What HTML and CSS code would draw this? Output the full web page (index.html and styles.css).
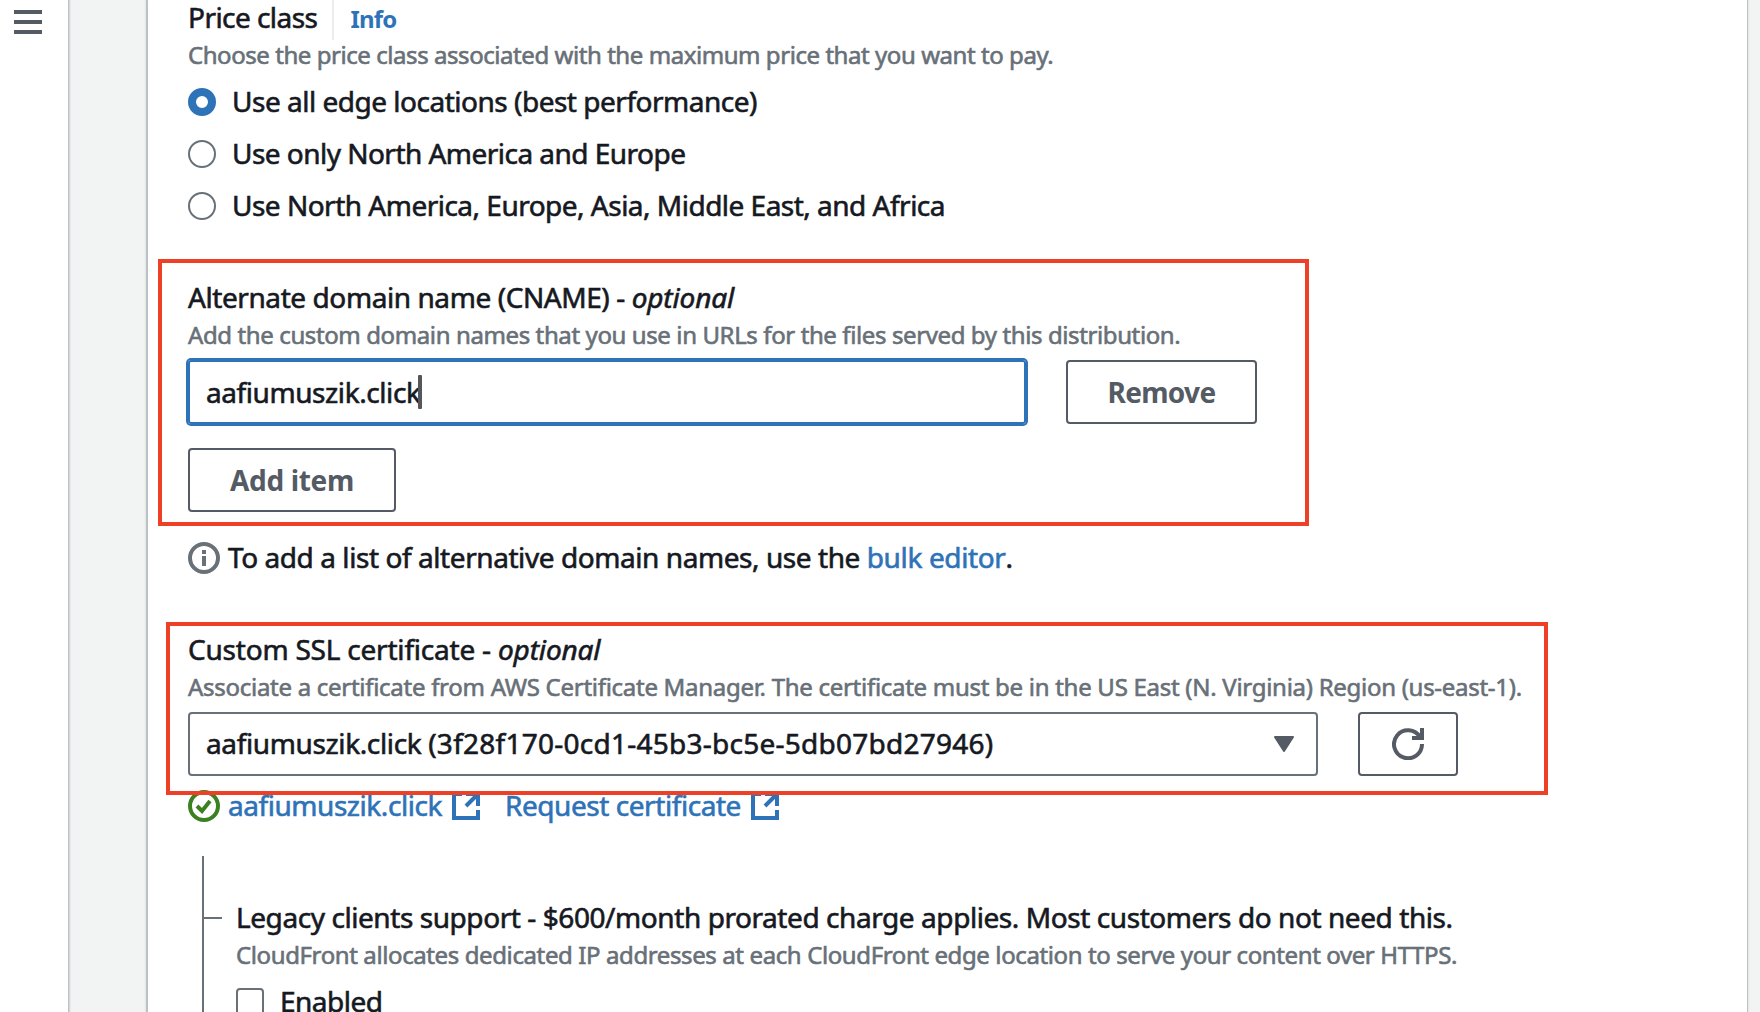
FILE: index.html
```html
<!DOCTYPE html>
<html lang="en">
<head>
<meta charset="utf-8">
<title>Create distribution</title>
<link rel="stylesheet" href="styles.css">
</head>
<body>
<div class="app">
  <nav class="rail" aria-label="Navigation">
    <svg class="menu" width="28" height="24" viewBox="0 0 28 24"><path d="M0 2h28M0 12h28M0 22h28" stroke="#545b64" stroke-width="4"/></svg>
  </nav>
  <main class="card">
    <section class="price">
      <div class="price-head"><h2 class="label ls-price">Price class</h2><a class="info">Info</a></div>
      <p class="hint hint-price">Choose the price class associated with the maximum price that you want to pay.</p>
      <div class="radios">
        <label class="radio"><span class="dot checked"></span><span class="radio-text ls-all">Use all edge locations (best performance)</span></label>
        <label class="radio"><span class="dot"></span><span class="radio-text ls-two">Use only North America and Europe</span></label>
        <label class="radio"><span class="dot"></span><span class="radio-text ls-three">Use North America, Europe, Asia, Middle East, and Africa</span></label>
      </div>
    </section>

    <section class="cname">
      <h2 class="label ls-cname-label">Alternate domain name (CNAME) - <i>optional</i></h2>
      <p class="hint ls-cname">Add the custom domain names that you use in URLs for the files served by this distribution.</p>
      <div class="row">
        <div class="input"><span class="ls-input">aafiumuszik.click</span><span class="caret"></span></div>
        <button class="btn remove">Remove</button>
      </div>
      <button class="btn add">Add item</button>
      <div class="mark mark-cname"></div>
    </section>

    <p class="note">
      <svg class="status" width="32" height="32" viewBox="0 0 32 32" fill="none"><circle cx="16" cy="16" r="14" stroke="#687078" stroke-width="4"/><path d="M16 8v4M16 14v10" stroke="#687078" stroke-width="4"/></svg>
      <span class="ls-note">To add a list of alternative domain names, use the <a class="link">bulk editor</a>.</span>
    </p>

    <section class="ssl">
      <h2 class="label ls-ssl">Custom SSL certificate - <i>optional</i></h2>
      <p class="hint ls-assoc">Associate a certificate from AWS Certificate Manager. The certificate must be in the US East (N. Virginia) Region (us-east-1).</p>
      <div class="row">
        <div class="select"><span class="select-text"><span class="ls-host">aafiumuszik.click </span><span class="ls-uuid">(3f28f170-0cd1-45b3-bc5e-5db07bd27946)</span></span>
          <svg width="20" height="16" viewBox="0 0 20 16"><path d="M1 1h18l-9 14z" fill="#545b64" stroke="#545b64" stroke-width="2" stroke-linejoin="round"/></svg>
        </div>
        <button class="btn refresh" aria-label="Refresh">
          <svg width="32" height="32" viewBox="0 0 32 32" fill="none" stroke="#545b64" stroke-width="4"><path d="M30 16A14 14 0 1 1 28 9"/><path d="M30 0v10H20"/></svg>
        </button>
      </div>
      <div class="mark mark-ssl"></div>
    </section>

    <div class="links">
      <svg class="status" width="32" height="32" viewBox="0 0 32 32" fill="none" stroke="#3a8120" stroke-width="4"><circle cx="16" cy="16" r="14"/><path d="M9 16l5 5 8-10"/></svg>
      <a class="link cert">aafiumuszik.click</a>
      <svg class="ext" width="28" height="28" viewBox="0 0 28 28" fill="none" stroke="#2e73b8" stroke-width="4"><path d="M10 2H2v24h24v-8"/><path d="M14 2h12v12M26 2L14 14"/></svg>
      <a class="link request">Request certificate</a>
      <svg class="ext" width="28" height="28" viewBox="0 0 28 28" fill="none" stroke="#2e73b8" stroke-width="4"><path d="M10 2H2v24h24v-8"/><path d="M14 2h12v12M26 2L14 14"/></svg>
    </div>

    <section class="tree">
      <div class="branch"></div>
      <div class="tree-body">
        <h2 class="label ls-legacy">Legacy clients support - $600/month prorated charge applies. Most customers do not need this.</h2>
        <p class="hint ls-cloud">CloudFront allocates dedicated IP addresses at each CloudFront edge location to serve your content over HTTPS.</p>
        <label class="check"><span class="box"></span><span class="ls-enabled">Enabled</span></label>
      </div>
    </section>
  </main>
</div>
</body>
</html>
```
FILE: styles.css
```css
* { box-sizing: border-box; }

body {
  margin: 0;
  font: 28px/36px "Noto Sans", "Open Sans", sans-serif;
  color: #16191f;
  -webkit-text-stroke: 0.6px currentColor;
  white-space: nowrap;
}

h2, p { margin: 0; font-weight: 400; font-size: inherit; }

.app {
  display: flex;
  height: 1012px;
  overflow: hidden;
  background: #f2f4f4;
}

.rail {
  width: 68px;
  padding: 10px 14px;
  background: #fff;
  box-shadow: 1px 0 0 #bcc1c5, 2px 0 0 #d3d8da, 3px 0 0 #e6eaea;
}

.menu { display: block; }

.card {
  width: 1602px;
  margin-left: 78px;
  padding-left: 40px;
  border: solid #bcc1c5;
  border-width: 0 1px 0 2px;
  background: #fff;
  box-shadow: 0 0 2px #cdd3d5;
}

.hint { font-size: 24px; color: #687078; margin-top: 2px; }

.price-head { display: flex; height: 40px; line-height: 34px; }

.info {
  margin-left: 15px;
  padding: 2px 0 0 16px;
  border-left: 2px solid #eaeded;
  font-size: 24px;
  font-weight: 700;
  color: #2e73b8;
  letter-spacing: -0.8px;
  -webkit-text-stroke: 0;
}

.hint-price { margin: 0; line-height: 30px; letter-spacing: -0.44px; }

.radios { margin-top: 6px; }
.radio { display: flex; align-items: center; height: 52px; }
.radio-text { padding-bottom: 2px; }

.dot {
  width: 28px;
  height: 28px;
  margin-right: 16px;
  border: 2px solid #687078;
  border-radius: 50%;
}
.dot.checked { border: 8px solid #2e73b8; }

.cname { position: relative; margin-top: 47px; }

.row { display: flex; gap: 40px; margin-top: 7px; }

.input, .select {
  display: flex;
  align-items: center;
  height: 64px;
  border-radius: 4px;
}
.input {
  width: 838px;
  padding-left: 18px;
  border-radius: 3px;
  box-shadow: inset 0 0 0 2px #2e73b8, 0 0 0 2px #2e73b8;
}
.caret { width: 4px; height: 34px; margin-left: -2px; background: #55565a; border-radius: 1px; }

.select {
  justify-content: space-between;
  width: 1130px;
  padding: 0 22px 0 16px;
  border: 2px solid #687078;
}
.select-text { white-space: pre; padding-bottom: 2px; }

.btn {
  display: flex;
  align-items: center;
  justify-content: center;
  height: 64px;
  padding: 0;
  border: 2px solid #545b64;
  border-radius: 4px;
  background: #fff;
  color: #545b64;
  font: 700 28px/36px "Noto Sans", "Open Sans", sans-serif;
  -webkit-text-stroke: 0;
}
.remove { width: 191px; letter-spacing: -0.7px; }
.add { width: 208px; margin-top: 24px; letter-spacing: -0.35px; }
.refresh { width: 100px; }

.mark {
  position: absolute;
  border: 4px solid #ee4027;
  pointer-events: none;
}
.mark-cname { left: -30px; top: -20px; width: 1151px; height: 267px; }
.mark-ssl { left: -22px; top: -9px; width: 1382px; height: 173px; }

.note { display: flex; margin-top: 27px; }
.status { margin: 3px 8px 0 0; flex: none; }
.link { color: #2e73b8; }
.note .link { letter-spacing: -0.37px; }

.ssl { position: relative; margin-top: 56px; }

.links { display: flex; margin-top: 11px; }
.cert { letter-spacing: -0.45px; }
.request { margin-left: 25px; letter-spacing: -0.44px; }
.ext { margin: 5px 0 0 10px; }

.tree { display: flex; height: 156px; margin: 33px 0 0 14px; }
.branch { width: 20px; border-left: 2px solid #687078; }
.branch::before {
  content: "";
  display: block;
  height: 62px;
  margin-top: -1px;
  border-bottom: 2px solid #687078;
}
.tree-body { padding: 43px 0 0 14px; }

.check { display: flex; margin-top: 10px; }
.box {
  width: 28px;
  height: 28px;
  margin: 5px 16px 0 0;
  border: 2px solid #687078;
  border-radius: 4px;
}

i { letter-spacing: -0.15px; }
.ls-price { letter-spacing: -0.55px; }
.ls-all { letter-spacing: -0.49px; }
.ls-two { letter-spacing: -0.53px; }
.ls-three { letter-spacing: -0.51px; }
.ls-cname-label { letter-spacing: -0.42px; }
.ls-cname { letter-spacing: -0.39px; }
.ls-input { letter-spacing: -0.42px; }
.ls-note { letter-spacing: -0.43px; }
.ls-ssl { letter-spacing: -0.21px; }
.ls-assoc { letter-spacing: -0.28px; }
.ls-host { letter-spacing: -0.37px; }
.ls-uuid { letter-spacing: 0.25px; }
.ls-legacy { letter-spacing: -0.43px; }
.ls-cloud { letter-spacing: -0.39px; }
.ls-enabled { letter-spacing: -0.5px; }
```
